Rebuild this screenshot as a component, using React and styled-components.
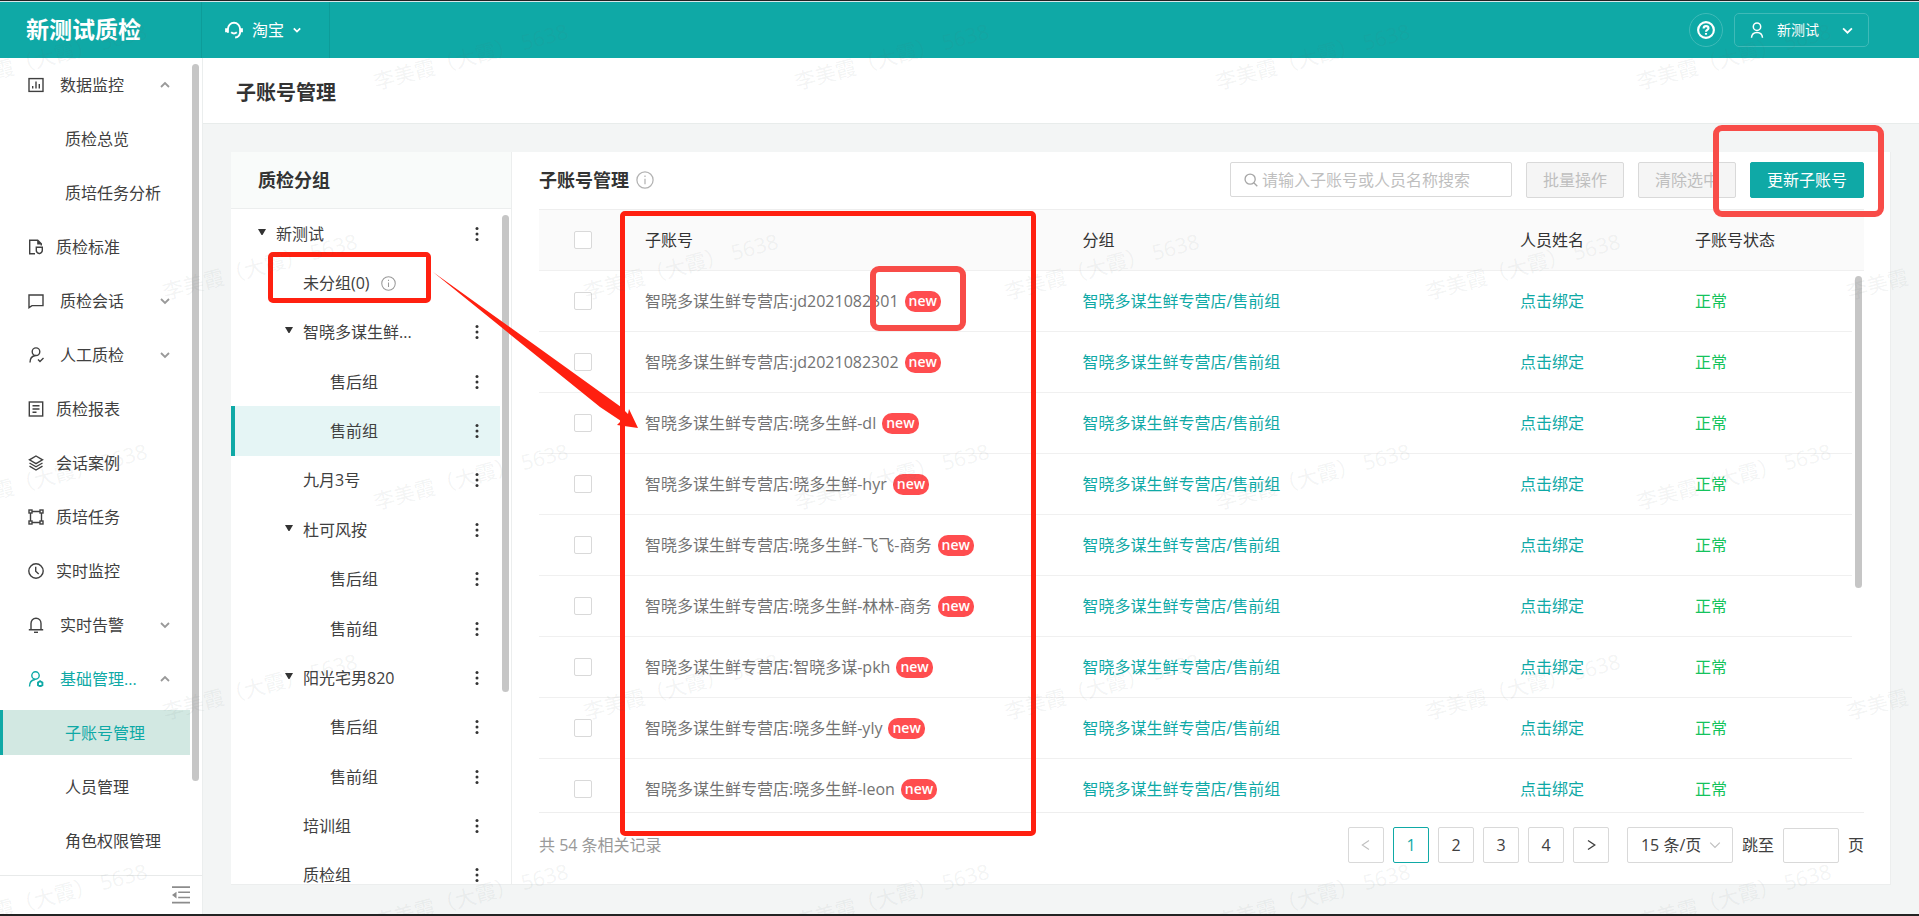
import styled, { createGlobalStyle } from "styled-components"

const GlobalStyle = createGlobalStyle`
    * {
        box-sizing: border-box;
    }
    body {
        margin: 0;
        font-family: "Open Sans", "Noto Sans CJK SC", sans-serif;
        font-size: 16px;
        line-height: 24px;
        color: #404040;
    }
    button, input, select {
        font: inherit;
        color: inherit;
    }
    ul {
        list-style: none;
        margin: 0;
        padding: 0;
    }
    h1, h2 {
        margin: 0;
    }
`

const Page = styled.div`
    position: relative;
    display: flex;
    flex-direction: column;
    height: 100vh;
    overflow: hidden;
    background-color: #f3f5f5;
    border-top: 1px solid #232323;
    border-bottom: 2px solid #232323;
`

const TopBar = styled.header`
    display: flex;
    align-items: center;
    flex: none;
    height: 57px;
    padding-right: 50px;
    border-top: 1px solid #d9e6ea;
    background-color: #0fa9a6;
    color: #fff;
`

const Logo = styled.div`
    width: 202px;
    padding: 0 0 2px 26px;
    line-height: 54px;
    font-size: 23px;
    font-weight: 700;
    border-right: 1px solid #0d9c99;
`

const Platform = styled.button`
    display: flex;
    align-items: center;
    gap: 9px;
    width: 128px;
    height: 56px;
    padding: 0 0 0 23px;
    border: 0;
    border-right: 1px solid #0d9c99;
    background: none;
    cursor: pointer;
`

const TopActions = styled.div`
    display: flex;
    gap: 11px;
    margin-left: auto;
`

const HelpButton = styled.button`
    display: flex;
    align-items: center;
    justify-content: center;
    width: 34px;
    height: 34px;
    padding: 0;
    border: 1px solid #3fbab8;
    border-radius: 50%;
    background: none;
`

const UserButton = styled.button`
    display: flex;
    align-items: center;
    gap: 12px;
    width: 135px;
    height: 34px;
    padding: 0 15px 0 14px;
    border: 1px solid #3fbab8;
    border-radius: 5px;
    background: none;
    font-size: 14px;
    svg:last-child {
        margin-left: auto;
    }
`

const Body = styled.div`
    display: flex;
    flex: 1;
    min-height: 0;
`

const Sidebar = styled.aside`
    position: relative;
    display: flex;
    flex-direction: column;
    flex: none;
    width: 203px;
    background-color: #fff;
    border-right: 1px solid #ebeeee;
`

const Menu = styled.ul`
    display: flex;
    flex-direction: column;
    gap: 9px;
    flex: 1;
    min-height: 0;
    padding: 4px 12px 0 0;
    overflow: hidden;
`

const MenuLink = styled.a`
    display: flex;
    align-items: center;
    height: 45px;
    padding-left: ${({ $child }) => ($child ? 65 : 28)}px;
    padding-right: 20px;
    color: ${({ $on }) => ($on ? "#0fa9a6" : "#404040")};
    background-color: ${({ $picked }) => ($picked ? "#d2e8e2" : "transparent")};
    box-shadow: ${({ $picked }) => ($picked ? "inset 3px 0 #0fa9a6" : "none")};
    text-decoration: none;
    white-space: nowrap;
    span {
        padding-left: ${({ $child, $wide }) => ($child ? 0 : $wide ? 16 : 12)}px;
    }
    svg:last-child {
        margin-left: auto;
        color: #999;
    }
`

const SideFooter = styled.div`
    display: flex;
    justify-content: flex-end;
    align-items: center;
    height: 39px;
    padding-right: 12px;
    border-top: 1px solid #e8eaea;
    color: #8c8c8c;
`

const CollapseButton = styled.button`
    display: flex;
    padding: 0;
    border: 0;
    background: none;
`

// thin grey thumb over a scrolling area
const Thumb = styled.i`
    position: absolute;
    top: ${({ $top }) => $top}px;
    right: ${({ $right }) => $right}px;
    width: 7px;
    height: ${({ $height }) => $height};
    border-radius: 4px;
    background-color: #c6c6c6;
`

const Main = styled.main`
    display: flex;
    flex-direction: column;
    flex: 1;
    min-width: 0;
`

const PageTitle = styled.h1`
    flex: none;
    height: 66px;
    padding: 0 33px;
    line-height: 69px;
    font-size: 20px;
    color: #333;
    background-color: #fff;
    border-bottom: 1px solid #e8eceb;
`

const Card = styled.section`
    display: flex;
    flex: 1;
    min-height: 0;
    margin: 28px 28px 29px;
    background-color: #fff;
    border: 1px solid #eceeee;
    border-width: 0 1px 1px 0;
`

const GroupPanel = styled.div`
    position: relative;
    flex: none;
    width: 281px;
    overflow: hidden;
    border-right: 1px solid #eceeee;
`

const GroupTitle = styled.h2`
    height: 57px;
    padding-left: 27px;
    line-height: 56px;
    font-size: 18px;
    color: #333;
    background-color: #f9fbfa;
    border-bottom: 1px solid #eceeee;
`

const Tree = styled.ul`
    display: grid;
    grid-auto-rows: 1fr;
    height: 691px;
    padding-right: 11px;
`

const TreeRow = styled.li`
    display: flex;
    align-items: center;
    padding-left: ${({ $level }) => 27 + $level * 27}px;
    padding-right: 21px;
    background-color: ${({ $on }) => ($on ? "#e5f5f5" : "transparent")};
    box-shadow: ${({ $on }) => ($on ? "inset 4px 0 #0fa9a6" : "none")};
`

const Twist = styled.span`
    display: flex;
    width: 18px;
    padding-bottom: 4px;
`

const TreeInfo = styled.span`
    display: flex;
    padding-left: 11px;
    color: #999;
`

const MoreButton = styled.button`
    display: flex;
    margin-left: auto;
    padding: 0;
    border: 0;
    background: none;
`

const Content = styled.div`
    display: flex;
    flex-direction: column;
    flex: 1;
    min-width: 0;
    padding: 0 26px 21px 27px;
`

const Toolbar = styled.div`
    display: flex;
    align-items: center;
    flex: none;
    gap: 14px;
    height: 57px;
    padding-bottom: 2px;
    h2 {
        font-size: 18px;
        color: #333;
    }
`

const Heading = styled.div`
    display: flex;
    align-items: center;
    gap: 7px;
    margin-right: auto;
    color: #b3b3b3;
`

const Search = styled.label`
    display: flex;
    align-items: center;
    gap: 4px;
    width: 282px;
    height: 35px;
    padding: 0 13px;
    border: 1px solid #d9d9d9;
    border-radius: 2px;
    color: #a6a6a6;
    input {
        flex: 1;
        min-width: 0;
        padding: 0;
        border: 0;
        outline: 0;
        background: none;
    }
    input::placeholder {
        color: #bfbfbf;
    }
`

const Button = styled.button`
    height: 36px;
    padding: 0 16px;
    border: 1px solid ${({ $primary }) => ($primary ? "#0fa9a6" : "#d9d9d9")};
    border-radius: 2px;
    background-color: ${({ $primary }) => ($primary ? "#0fa9a6" : "#f5f5f5")};
    color: ${({ $primary }) => ($primary ? "#fff" : "#bfbfbf")};
    line-height: 32px;
`

const TableBox = styled.div`
    position: relative;
    flex: 1;
    min-height: 0;
    overflow: hidden;
    border-top: 1px solid #eeeeee;
    border-bottom: 1px solid #eeeeee;
`

const Table = styled.table`
    width: 100%;
    table-layout: fixed;
    border-collapse: separate;
    border-spacing: 0;
    th, td {
        height: 61px;
        padding: 0 18px 1px;
        text-align: left;
        font-weight: 400;
        white-space: nowrap;
        border-bottom: 1px solid #f0f0f0;
    }
    th {
        color: #333;
        background-color: #fafafa;
    }
    td {
        color: #737373;
    }
    td:last-child {
        border: 0;
    }
`

const Col = styled.col`
    width: ${({ $w }) => $w}px;
`

const CheckCell = styled.td`
    && {
        padding: 0;
        text-align: center;
    }
`

const Checkbox = styled.input`
    appearance: none;
    display: block;
    width: 18px;
    height: 18px;
    margin: 0 auto;
    border: 1px solid #d9d9d9;
    border-radius: 2px;
    background-color: #fff;
`

const NewTag = styled.span`
    display: inline-block;
    vertical-align: top;
    height: 21px;
    margin: 2px 0 0 6px;
    padding: 0 4px;
    border-radius: 10px;
    background-color: #ff4d4f;
    color: #fff;
    line-height: 20px;
    font-weight: 600;
    font-size: 14px;
`

const TableLink = styled.a`
    color: #0fa9a6;
    text-decoration: none;
`

const Status = styled.span`
    color: #14c35c;
`

const Footer = styled.div`
    display: flex;
    align-items: center;
    gap: 9px;
    flex: none;
    padding-top: 14px;
`

const Total = styled.span`
    margin-right: auto;
    color: #999;
`

const PageButton = styled.button`
    display: flex;
    align-items: center;
    justify-content: center;
    width: 36px;
    height: 36px;
    padding: 0;
    border: 1px solid ${({ $on }) => ($on ? "#0fa9a6" : "#d9d9d9")};
    border-radius: 2px;
    background-color: #fff;
    color: ${({ $on }) => ($on ? "#0fa9a6" : "#404040")};
    &:disabled {
        color: #bfbfbf;
    }
`

const SizeBox = styled.div`
    display: grid;
    align-items: center;
    margin-left: 9px;
    select, svg {
        grid-area: 1 / 1;
    }
    select {
        appearance: none;
        width: 106px;
        height: 36px;
        padding: 0 13px;
        border: 1px solid #d9d9d9;
        border-radius: 2px;
        background-color: #fff;
    }
    svg {
        justify-self: end;
        margin-right: 12px;
        color: #bfbfbf;
        pointer-events: none;
    }
`

const Jump = styled.label`
    display: flex;
    align-items: center;
    gap: 9px;
    input {
        width: 56px;
        height: 35px;
        border: 1px solid #d9d9d9;
        border-radius: 2px;
    }
`

// hand drawn marks that float over the page
const Mark = styled.div`
    position: absolute;
    left: ${({ $x }) => $x}px;
    top: ${({ $y }) => $y}px;
    width: ${({ $w }) => $w}px;
    height: ${({ $h }) => $h}px;
    border: ${({ $soft }) => ($soft ? "6px solid #f84c48" : "5px solid #ff2010")};
    border-radius: ${({ $soft }) => ($soft ? 9 : 5)}px;
    pointer-events: none;
`

const Overlay = styled.svg`
    position: absolute;
    top: -1px;
    left: 0;
    width: 100%;
    height: 100vh;
    pointer-events: none;
    text {
        font-size: 21px;
        fill: #5a6e6e;
        fill-opacity: 0.08;
    }
`

const Icon = ({ size = 16, box = 16, width = 1.4, children }) => (
    <svg width={size} height={size} viewBox={`0 0 ${box} ${box}`} fill="none" stroke="currentColor" strokeWidth={width} style={{ flex: "none" }}>
        {children}
    </svg>
)

const icons = {
    chart: <><rect x="1" y="1.600" width="14" height="12.800" /><path d="M4.700 11.500V9M8 11.500V4.600M11.300 11.500V7" /></>,
    standard: <><path d="M7 14.700H1.700V1.300h8l3.600 3.600v1.600" /><path d="M9.200 1v4.400h4.600z" fill="currentColor" stroke="none" /><path d="M8.300 8.300h6v3.200c0 1.700-1.200 2.600-3 3.200-1.800-.6-3-1.500-3-3.200z" /></>,
    message: <path d="M1 2h14v10.600H4L1 14.600z" />,
    userCheck: <><circle cx="8" cy="4.700" r="3.800" /><path d="M2 15.500c0-4 2-6.500 5.500-7M10 12.500l2 2 3.500-3.500" /></>,
    report: <><rect x="1.300" y="1" width="13.400" height="14" /><path d="M4.500 4.800h7M4.500 8h7M4.500 11.200h4" /></>,
    layers: <path d="M8 1l6.500 3.800L8 8.600 1.500 4.800zM1.500 8L8 11.800 14.500 8M1.500 11.200L8 15l6.500-3.800" />,
    frame: <><path d="M4 2.500h8M4 13.500h8M2.500 4v8M13.500 4v8" /><rect x="1" y="1" width="3" height="3" /><rect x="12" y="1" width="3" height="3" /><rect x="1" y="12" width="3" height="3" /><rect x="12" y="12" width="3" height="3" /></>,
    clock: <><circle cx="8" cy="8" r="7.200" /><path d="M7.700 3.800v4.500l3 2.700" /></>,
    bell: <><path d="M.8 12.800h14.400M3 12.800V6.500c0-3 2-5.300 5-5.300s5 2.300 5 5.300v6.300" /><path d="M6 15.300h4" /></>,
    userGear: <><circle cx="7.500" cy="4.500" r="3.700" /><path d="M1.500 15.500c0-4 2-6.500 5.500-7" /><path d="M12.200 10.200l2.200 1.300v2.600l-2.200 1.300-2.200-1.300v-2.600z" strokeWidth="1.900" /></>,
}

const Chevron = ({ up, size = 11, width = 1.6 }) => (
    <Icon size={size} box={10} width={width}>
        <path d={up ? "M1 7l4-4 4 4" : "M1 3l4 4 4-4"} />
    </Icon>
)

const InfoIcon = ({ size }) => (
    <Icon size={size} width={1.1}>
        <circle cx="8" cy="8" r="7.200" />
        <path d="M8 6.800v5M8 4v1.300" />
    </Icon>
)

const menu = [
    { text: "数据监控", icon: "chart", open: true },
    { text: "质检总览", child: true },
    { text: "质培任务分析", child: true },
    { text: "质检标准", icon: "standard" },
    { text: "质检会话", icon: "message", open: false },
    { text: "人工质检", icon: "userCheck", open: false },
    { text: "质检报表", icon: "report" },
    { text: "会话案例", icon: "layers" },
    { text: "质培任务", icon: "frame" },
    { text: "实时监控", icon: "clock" },
    { text: "实时告警", icon: "bell", open: false },
    { text: "基础管理...", icon: "userGear", open: true, on: true },
    { text: "子账号管理", child: true, on: true, picked: true },
    { text: "人员管理", child: true },
    { text: "角色权限管理", child: true },
]

const tree = [
    { text: "新测试", level: 0, parent: true },
    { text: "未分组(0)", level: 1, info: true },
    { text: "智晓多谋生鲜...", level: 1, parent: true },
    { text: "售后组", level: 2 },
    { text: "售前组", level: 2, on: true },
    { text: "九月3号", level: 1 },
    { text: "杜可风按", level: 1, parent: true },
    { text: "售后组", level: 2 },
    { text: "售前组", level: 2 },
    { text: "阳光宅男820", level: 1, parent: true },
    { text: "售后组", level: 2 },
    { text: "售前组", level: 2 },
    { text: "培训组", level: 1 },
    { text: "质检组", level: 1 },
]

const accounts = [
    "jd2021082301",
    "jd2021082302",
    "晓多生鲜-dl",
    "晓多生鲜-hyr",
    "晓多生鲜-飞飞-商务",
    "晓多生鲜-林林-商务",
    "智晓多谋-pkh",
    "晓多生鲜-yly",
    "晓多生鲜-leon",
]

const watermarks = []
for (let row = 0; row < 5; row++) {
    for (let col = 0; col < 6; col++) {
        watermarks.push({ x: (row % 2 ? 165 : -45) + col * 421, y: 90 + row * 210 })
    }
}

const App = () => {

    return (
        <Page>
            <GlobalStyle />
            <TopBar>
                <Logo>新测试质检</Logo>
                <Platform>
                    <Icon size={18} width={1.7}>
                        <path d="M2.600 10.500V7a5.400 5.400 0 0 1 10.800 0v3.500a5 5 0 0 1-4.400 4.200M5.500 10c1.500 1.300 3.500 1.300 5 0" />
                        <path d="M1.300 6.500v3.500M14.700 6.500v3.500" strokeWidth="2.400" />
                    </Icon>
                    淘宝
                    <Chevron size={8} width={2.2} />
                </Platform>
                <TopActions>
                    <HelpButton aria-label="帮助">
                        <Icon size={18} width={1.9}>
                            <circle cx="8" cy="8" r="7" />
                            <path d="M5.900 6.700c0-2.900 4.300-2.700 4.300-.2C10.200 8 8 8 8 9.600M8 10.700v1.500" />
                        </Icon>
                    </HelpButton>
                    <UserButton>
                        <Icon width={1.5}>
                            <circle cx="8" cy="4.700" r="3.700" />
                            <path d="M2.500 15.800c.2-3.300 2-5.300 5.500-5.300s5.300 2 5.500 5.300" />
                        </Icon>
                        新测试
                        <Chevron size={11} />
                    </UserButton>
                </TopActions>
            </TopBar>
            <Body>
                <Sidebar>
                    <Menu>
                        {menu.map((item) => (
                            <li key={item.text}>
                                <MenuLink href="#" $child={item.child} $on={item.on} $picked={item.picked} $wide={item.open !== undefined}>
                                    {item.icon && <Icon>{icons[item.icon]}</Icon>}
                                    <span>{item.text}</span>
                                    {item.open !== undefined && <Chevron up={item.open} size={10} width={1.8} />}
                                </MenuLink>
                            </li>
                        ))}
                    </Menu>
                    <Thumb $top={6} $right={3} $height="717px" />
                    <SideFooter>
                        <CollapseButton aria-label="收起菜单">
                            <Icon size={18} width={1.4}>
                                <path d="M0 1h16M5.500 5.600H16M5.500 10.200H16M0 14.800h16" />
                                <path d="M4 5v6L0 8z" fill="currentColor" stroke="none" />
                            </Icon>
                        </CollapseButton>
                    </SideFooter>
                </Sidebar>
                <Main>
                    <PageTitle>子账号管理</PageTitle>
                    <Card>
                        <GroupPanel>
                            <GroupTitle>质检分组</GroupTitle>
                            <Tree>
                                {tree.map((node, i) => (
                                    <TreeRow key={i} $level={node.level} $on={node.on}>
                                        <Twist>
                                            {node.parent && (
                                                <svg width="8" height="6" viewBox="0 0 8 6"><path d="M0 0h8L4.500 6h-1z" fill="#333" /></svg>
                                            )}
                                        </Twist>
                                        {node.text}
                                        {node.info
                                            ? <TreeInfo><InfoIcon size={15} /></TreeInfo>
                                            : (
                                                <MoreButton aria-label="更多">
                                                    <svg width="4" height="14" viewBox="0 0 4 14" fill="#333">
                                                        <circle cx="2" cy="1.500" r="1.500" />
                                                        <circle cx="2" cy="7" r="1.500" />
                                                        <circle cx="2" cy="12.500" r="1.500" />
                                                    </svg>
                                                </MoreButton>
                                            )}
                                    </TreeRow>
                                ))}
                            </Tree>
                            <Thumb $top={63} $right={2} $height="477px" />
                        </GroupPanel>
                        <Content>
                            <Toolbar>
                                <Heading>
                                    <h2>子账号管理</h2>
                                    <InfoIcon size={18} />
                                </Heading>
                                <Search>
                                    <Icon size={14} width={1.5}>
                                        <circle cx="7" cy="7" r="5.800" />
                                        <path d="M11.200 11.200l4 4" />
                                    </Icon>
                                    <input aria-label="搜索" placeholder="请输入子账号或人员名称搜索" />
                                </Search>
                                <Button disabled>批量操作</Button>
                                <Button disabled>清除选中</Button>
                                <Button $primary>更新子账号</Button>
                            </Toolbar>
                            <TableBox>
                                <Table>
                                    <colgroup>
                                        <Col $w={88} />
                                        <col />
                                        <col />
                                        <Col $w={175} />
                                        <Col $w={175} />
                                        <Col $w={12} />
                                    </colgroup>
                                    <thead>
                                        <tr>
                                            <CheckCell as="th"><Checkbox type="checkbox" aria-label="全选" /></CheckCell>
                                            <th>子账号</th>
                                            <th>分组</th>
                                            <th>人员姓名</th>
                                            <th>子账号状态</th>
                                            <CheckCell as="th" />
                                        </tr>
                                    </thead>
                                    <tbody>
                                        {accounts.map((name) => (
                                            <tr key={name}>
                                                <CheckCell><Checkbox type="checkbox" aria-label={name} /></CheckCell>
                                                <td>智晓多谋生鲜专营店:{name}<NewTag>new</NewTag></td>
                                                <td><TableLink href="#">智晓多谋生鲜专营店/售前组</TableLink></td>
                                                <td><TableLink href="#">点击绑定</TableLink></td>
                                                <td><Status>正常</Status></td>
                                                <CheckCell />
                                            </tr>
                                        ))}
                                    </tbody>
                                </Table>
                                <Thumb $top={66} $right={2} $height="312px" />
                            </TableBox>
                            <Footer>
                                <Total>共 54 条相关记录</Total>
                                <PageButton disabled aria-label="上一页">
                                    <Icon size={12}><path d="M12 2L3 8l9 6" /></Icon>
                                </PageButton>
                                {[1, 2, 3, 4].map((n) => (
                                    <PageButton key={n} $on={n === 1}>{n}</PageButton>
                                ))}
                                <PageButton aria-label="下一页">
                                    <Icon size={12} width={1.8}><path d="M4 2l9 6-9 6" /></Icon>
                                </PageButton>
                                <SizeBox>
                                    <select aria-label="每页条数">
                                        <option>15 条/页</option>
                                    </select>
                                    <Chevron size={12} width={1} />
                                </SizeBox>
                                <Jump>跳至<input aria-label="页码" />页</Jump>
                            </Footer>
                        </Content>
                    </Card>
                </Main>
            </Body>
            <Mark $x={268} $y={251} $w={163} $h={51} />
            <Mark $x={620} $y={210} $w={416} $h={625} />
            <Mark $soft $x={870} $y={265} $w={96} $h={65} />
            <Mark $soft $x={1713} $y={124} $w={171} $h={92} />
            <Overlay>
                <path d="M433 272L621 407L628 414L629 409L638 428L617 425L621 421L600 407z" fill="#ff2010" />
                {watermarks.map(({ x, y }) => (
                    <text key={`${x}-${y}`} transform={`translate(${x} ${y}) rotate(-15)`}>李美霞（大霞） 5638</text>
                ))}
            </Overlay>
        </Page>
    )
}

export default App;
